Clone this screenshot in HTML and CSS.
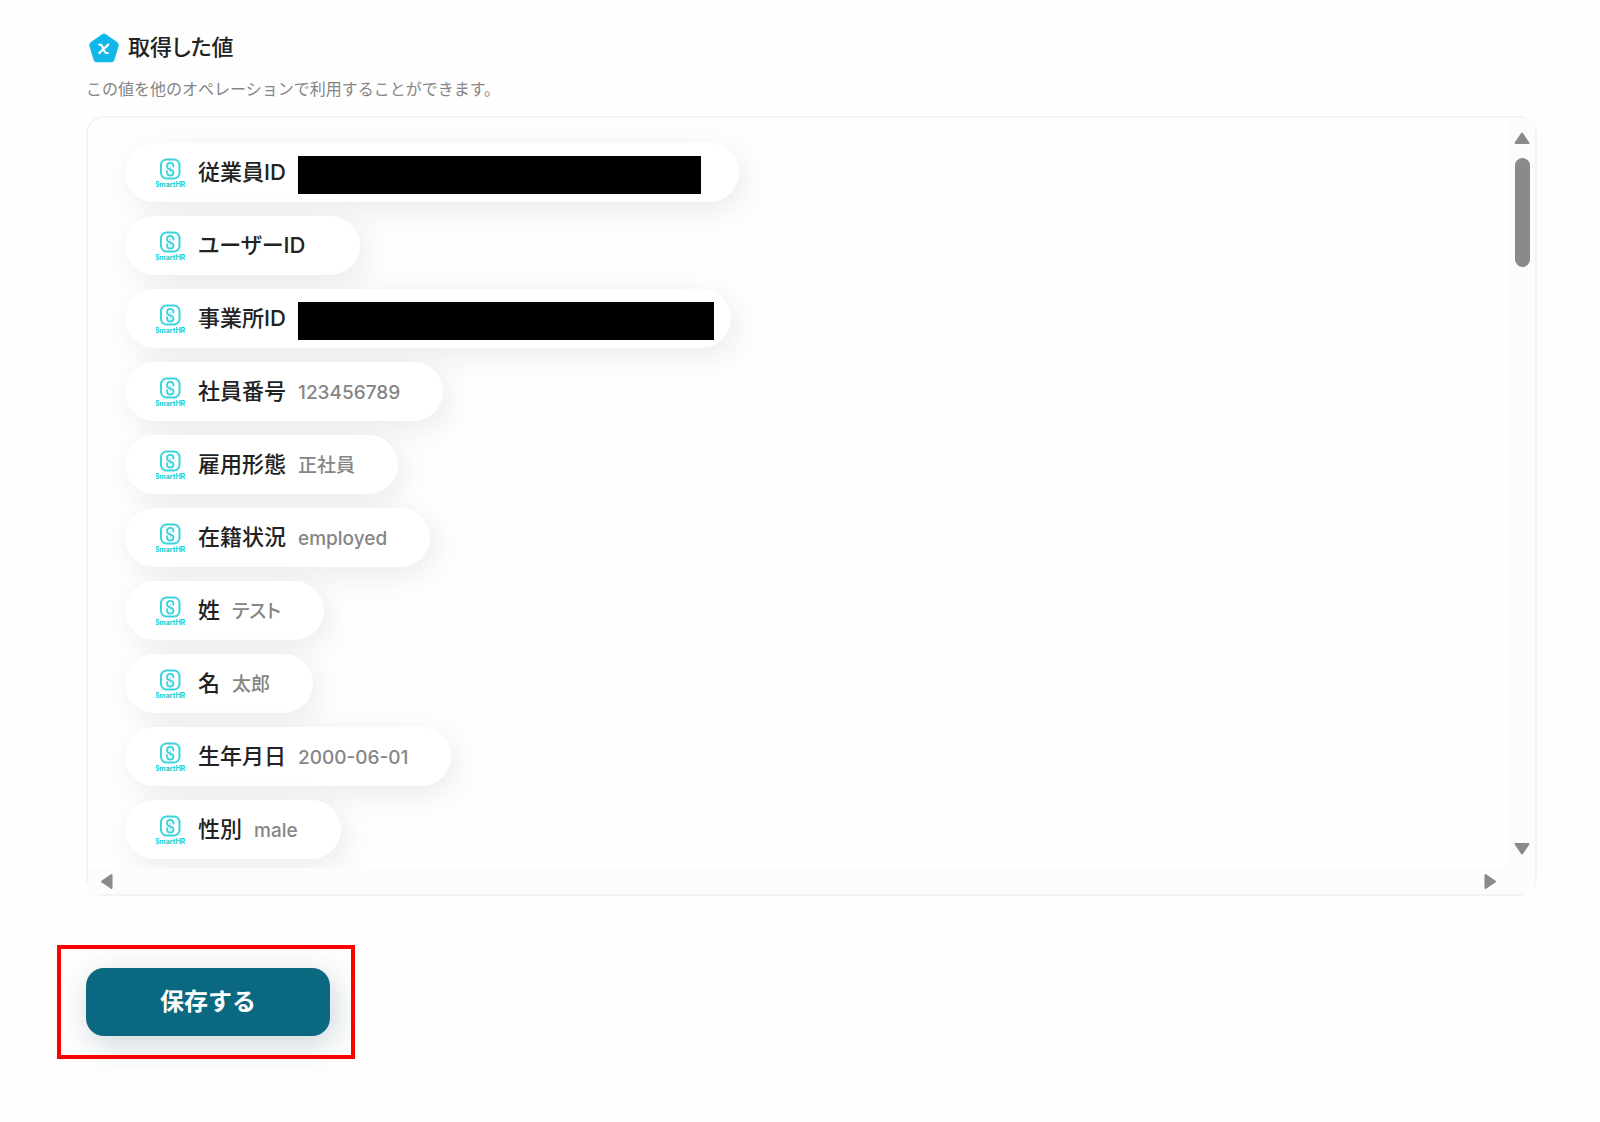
FILE: index.html
```html
<!DOCTYPE html>
<html lang="ja">
<head>
<meta charset="utf-8">
<meta name="viewport" content="width=device-width, initial-scale=1">
<title>取得した値</title>
<link rel="stylesheet" href="styles.css">
</head>
<body>
<svg class="sprite" aria-hidden="true">
  <symbol id="mark" viewBox="0 0 30 30">
    <rect x="5" y="1.500" width="18.500" height="19" rx="5.500" fill="none" stroke="#3bd3dc" stroke-width="2"/>
    <path d="M17.400 8.600V8a3.150 3.150 0 0 0-6.300 0v.7c0 1.300.8 1.900 1.900 2.300l2.500 1c1.100.4 1.900 1 1.900 2.200v.2a3.150 3.150 0 0 1-6.300 0v-1.200" fill="none" stroke="#3bd3dc" stroke-width="1.900" stroke-linecap="round"/>
    <path d="M14.200 8.200v1.200M14.200 13.200v1.200" fill="none" stroke="#3bd3dc" stroke-width="1"/>
  </symbol>
</svg>
<main class="page">
  <section class="result">
    <h2 class="title">
      <svg class="title-icon" viewBox="0 0 30 30" aria-hidden="true">
        <path d="M13 1.200Q15-.2 17 1.200L28.300 9.300Q30.300 10.800 29.600 13L25.400 27Q24.700 29.300 22.300 29.300H7.700Q5.300 29.300 4.600 27L.4 13Q-.3 10.800 1.700 9.300Z" fill="#12b7ea"/>
        <path d="M10.300 11.600h.8c1 0 1.500.4 2 1.500l2.500 5.300c.5 1.100 1 1.600 2 1.600h1.100M19.300 11.600 10.300 20" fill="none" stroke="#fff" stroke-width="2.200" stroke-linecap="round"/>
      </svg>
      取得した値
    </h2>
    <p class="description">この値を他のオペレーションで利用することができます。</p>
    <div class="panel">
      <ul class="list">
        <li class="pill"><svg class="logo" viewBox="0 0 30 30"><use href="#mark"/><text x="14" y="29" class="logo-text">SmartHR</text></svg><span class="label">従業員ID</span><span class="value hidden-employee"><span class="redaction"></span></span></li>
        <li class="pill"><svg class="logo" viewBox="0 0 30 30"><use href="#mark"/><text x="14" y="29" class="logo-text">SmartHR</text></svg><span class="label">ユーザーID</span><span class="value"></span></li>
        <li class="pill"><svg class="logo" viewBox="0 0 30 30"><use href="#mark"/><text x="14" y="29" class="logo-text">SmartHR</text></svg><span class="label">事業所ID</span><span class="value hidden-office"><span class="redaction"></span></span></li>
        <li class="pill"><svg class="logo" viewBox="0 0 30 30"><use href="#mark"/><text x="14" y="29" class="logo-text">SmartHR</text></svg><span class="label">社員番号</span><span class="value">123456789</span></li>
        <li class="pill"><svg class="logo" viewBox="0 0 30 30"><use href="#mark"/><text x="14" y="29" class="logo-text">SmartHR</text></svg><span class="label">雇用形態</span><span class="value">正社員</span></li>
        <li class="pill"><svg class="logo" viewBox="0 0 30 30"><use href="#mark"/><text x="14" y="29" class="logo-text">SmartHR</text></svg><span class="label">在籍状況</span><span class="value">employed</span></li>
        <li class="pill"><svg class="logo" viewBox="0 0 30 30"><use href="#mark"/><text x="14" y="29" class="logo-text">SmartHR</text></svg><span class="label">姓</span><span class="value">テスト</span></li>
        <li class="pill"><svg class="logo" viewBox="0 0 30 30"><use href="#mark"/><text x="14" y="29" class="logo-text">SmartHR</text></svg><span class="label">名</span><span class="value">太郎</span></li>
        <li class="pill"><svg class="logo" viewBox="0 0 30 30"><use href="#mark"/><text x="14" y="29" class="logo-text">SmartHR</text></svg><span class="label">生年月日</span><span class="value">2000-06-01</span></li>
        <li class="pill"><svg class="logo" viewBox="0 0 30 30"><use href="#mark"/><text x="14" y="29" class="logo-text">SmartHR</text></svg><span class="label">性別</span><span class="value">male</span></li>
      </ul>
      <div class="track track-y">
        <svg class="arrow" viewBox="0 0 16 16" aria-hidden="true"><path d="M8 3.500 14.500 13H1.500Z"/></svg>
        <span class="thumb"></span>
        <svg class="arrow arrow-down" viewBox="0 0 16 16" aria-hidden="true"><path d="M1.500 4h13L8 13.500Z"/></svg>
      </div>
      <div class="track track-x">
        <svg class="arrow" viewBox="0 0 16 16" aria-hidden="true"><path d="M2 8.500 11.500 2v13Z"/></svg>
        <svg class="arrow" viewBox="0 0 16 16" aria-hidden="true"><path d="M14 8.500 4.500 2v13Z"/></svg>
      </div>
    </div>
  </section>
  <div class="highlight"><button class="save" type="button">保存する</button></div>
</main>
</body>
</html>
```
FILE: styles.css
```css
* {
  box-sizing: border-box;
}

body {
  margin: 0;
  background: #fefefe;
  color: #222;
  font-family: Inter, "Noto Sans CJK JP", sans-serif;
}

.sprite {
  position: absolute;
  width: 0;
  height: 0;
}

.page {
  padding: 31px 63px 63px 57px;
}

.result {
  padding-left: 29px;
}

.title {
  display: flex;
  align-items: center;
  gap: 9px;
  margin: 0;
  padding-left: 3px;
  font-size: 22px;
  line-height: 30px;
  font-weight: 500;
  font-feature-settings: "palt";
}

.title-icon {
  width: 30px;
  height: 30px;
  margin-top: 2px;
}

.description {
  margin: 14px 0 15px;
  color: #858585;
  font-size: 16px;
  line-height: 24px;
}

.panel {
  display: grid;
  grid-template-columns: 1fr 26px;
  grid-template-rows: auto 26px;
  border: 2px solid #f3f3f3;
  border-radius: 18px;
}

.list {
  display: flex;
  flex-direction: column;
  align-items: flex-start;
  gap: 14px;
  margin: 0;
  padding: 25px 37px 9px;
  overflow: hidden;
  border-top-left-radius: 16px;
  list-style: none;
}

.pill {
  display: flex;
  align-items: center;
  gap: 12px;
  height: 59px;
  padding: 0 43px 0 31px;
  border-radius: 30px;
  background: #fff;
  box-shadow: 6px 8px 32px rgba(0, 0, 0, 0.08);
}

.logo {
  width: 30px;
  height: 30px;
}

.logo-text {
  fill: #12d0d4;
  font: 700 7px Inter, sans-serif;
  text-anchor: middle;
}

.label {
  padding-bottom: 2px;
  font-size: 22px;
  line-height: 32px;
  font-weight: 500;
  font-feature-settings: "palt";
}

.value {
  padding-top: 2px;
  color: #858585;
  font-size: 19px;
  line-height: 28px;
  font-weight: 500;
  font-feature-settings: "palt";
}

.hidden-employee,
.hidden-office {
  padding-top: 4px;
}

.hidden-employee {
  width: 398px;
}

.hidden-office {
  width: 390px;
}

.redaction {
  display: block;
  width: 403px;
  height: 38px;
  background: #000;
}

.hidden-office .redaction {
  width: 416px;
}

.track {
  display: flex;
  align-items: center;
  background: #fcfcfc;
}

.track-y {
  flex-direction: column;
  padding: 12px 0;
}

.track-x {
  justify-content: space-between;
  grid-column: 1 / -1;
  padding: 0 38px 0 12px;
}

.arrow {
  width: 16px;
  height: 16px;
  fill: #8a8a8a;
  stroke: #8a8a8a;
  stroke-width: 2;
  stroke-linejoin: round;
}

.arrow-down {
  margin-top: auto;
}

.thumb {
  width: 15px;
  height: 109px;
  margin-top: 12px;
  border-radius: 8px;
  background: #8a8a8a;
}

.highlight {
  width: fit-content;
  margin-top: 49px;
  padding: 19px 21px 19px 25px;
  border: 4px solid #f00;
}

.save {
  width: 244px;
  height: 68px;
  border: 0;
  border-radius: 18px;
  background: #0a6880;
  box-shadow: 4px 8px 32px rgba(10, 50, 70, 0.2);
  color: #fff;
  font: 700 24px/36px Inter, "Noto Sans CJK JP", sans-serif;
}
```
